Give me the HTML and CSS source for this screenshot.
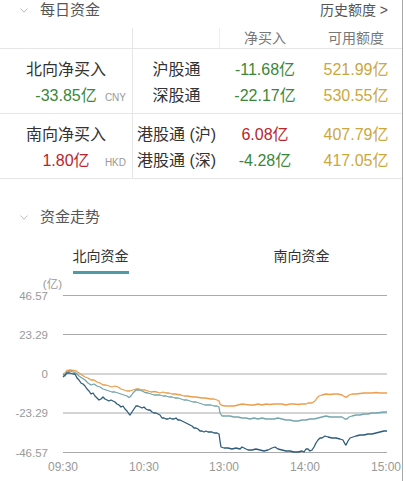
FILE: index.html
```html
<!DOCTYPE html>
<html lang="zh">
<head>
    <meta charset="UTF-8">
    <meta name="viewport" content="width=device-width, initial-scale=1.0">
    <title>资金流向</title>
    <link rel="stylesheet" href="styles.css">
</head>
<body>
    <div class="page">
        <div class="sec-head">
            <div class="sec-title">
                <svg class="chev" viewBox="0 0 8 5"><polyline points="0.5,0.5 4,4.2 7.5,0.5"/></svg>
                每日资金
            </div>
            <a class="more">历史额度 &gt;</a>
        </div>

        <div class="flow-table">
            <div class="flow-row flow-row--head">
                <div class="cell cell--left"></div>
                <div class="cell cell--mid"></div>
                <div class="cell">净买入</div>
                <div class="cell">可用额度</div>
            </div>
            <div class="flow-row">
                <div class="cell cell--left">
                    <div class="line">北向净买入</div>
                    <div class="line total"><span></span><span class="down">-33.85亿</span><span class="unit">CNY</span></div>
                </div>
                <div class="cell">
                    <div class="line">沪股通</div>
                    <div class="line">深股通</div>
                </div>
                <div class="cell">
                    <div class="line down">-11.68亿</div>
                    <div class="line down">-22.17亿</div>
                </div>
                <div class="cell">
                    <div class="line quota">521.99亿</div>
                    <div class="line quota">530.55亿</div>
                </div>
            </div>
            <div class="flow-row">
                <div class="cell cell--left">
                    <div class="line">南向净买入</div>
                    <div class="line total"><span></span><span class="up">1.80亿</span><span class="unit">HKD</span></div>
                </div>
                <div class="cell">
                    <div class="line">港股通 (沪)</div>
                    <div class="line">港股通 (深)</div>
                </div>
                <div class="cell">
                    <div class="line up">6.08亿</div>
                    <div class="line down">-4.28亿</div>
                </div>
                <div class="cell">
                    <div class="line quota">407.79亿</div>
                    <div class="line quota">417.05亿</div>
                </div>
            </div>
        </div>

        <div class="sec-head sec-head--trend">
            <div class="sec-title">
                <svg class="chev" viewBox="0 0 8 5"><polyline points="0.5,0.5 4,4.2 7.5,0.5"/></svg>
                资金走势
            </div>
        </div>

        <div class="tabs">
            <div class="tab tab--active"><span>北向资金</span></div>
            <div class="tab"><span>南向资金</span></div>
        </div>

        <svg class="chart" width="402" height="207" viewBox="0 274 402 207">
            <g class="grid">
                <line x1="63" y1="295.5" x2="387" y2="295.5"/>
                <line x1="63" y1="334.5" x2="387" y2="334.5"/>
                <line x1="63" y1="374" x2="387" y2="374"/>
                <line x1="63" y1="413" x2="387" y2="413"/>
                <line x1="63" y1="452.5" x2="387" y2="452.5"/>
            </g>
            <g class="axis">
                <text x="62" y="288" font-size="11">(亿)</text>
                <text x="48" y="300">46.57</text>
                <text x="48" y="339">23.29</text>
                <text x="48" y="378">0</text>
                <text x="48" y="417">-23.29</text>
                <text x="48" y="456.5">-46.57</text>
            </g>
            <g class="axis axis--x">
                <text x="63" y="471">09:30</text>
                <text x="144" y="471">10:30</text>
                <text x="224" y="471">13:00</text>
                <text x="305" y="471">14:00</text>
                <text x="386" y="471" text-anchor="end">15:00</text>
            </g>
            <!-- 沪股通 + 深股通 + 合计 -->
            <polyline class="series series--sh" points="63,374 65,373 67,370.5 70,370 73,370.5 76,371 79,373 82,375 85,377 88,378 91,380 94,380 97,382 100,383 103,385 106,385 109,386 112,387 115,386 118,387 121,389 124,390 127,391 130,391 133,390 136,389 139,389 142,390 145,390 148,391 151,392 154,391.5 157,392 160,393 163,392 166,393 169,393 172,394 175,394 178,394.5 181,395 184,396 187,396 190,396.5 193,397 196,397 199,397.5 202,398 205,398 208,398.5 211,399 214,399 217,400 219,401 220,404 222,405.5 226,406 230,406 234,406 238,405 242,404 246,404.5 250,405 254,405 258,404 262,405 266,404 270,404.5 274,404 278,404 282,404 286,405 290,404 294,404 298,404.5 302,404 306,404 308,403 312,403 315,401 317,398 319,396 322,395 326,394 330,394.5 334,394 338,394 342,395 345,397 347,397 349,395 352,394 356,394 360,393.5 364,393 368,393 372,393 376,392.5 380,393 384,393 387,393"/>
            <polyline class="series series--sz" points="63,374 65,376 67,372 70,371 73,372 76,373 79,376 82,378 85,380 88,383 91,385 94,384 97,386 100,387 103,389 106,390 109,391 112,392 115,392 118,393 121,394 124,395 127,396 129,397.5 131,396 133,393 136,390 139,390 142,391 145,392.5 148,393 151,394 154,395 157,395 160,395 163,396 166,396 169,397 172,397 175,398 178,398 181,399 184,400 187,400 190,401 193,402 196,402 199,403 202,404 205,405 208,405 211,405 214,406 217,406 219,407 220,413 222,416 226,416 230,416 234,417 238,417 242,418 246,418 250,419 254,418 258,419 262,418 266,419 270,419 274,419 278,418 282,419 286,420 290,420 294,421 298,421 302,420 306,420 310,419 314,419 318,418 322,417 326,416 330,417 334,417 338,417 342,417 345,419 347,419 349,417 352,416 356,415 360,415 364,414 368,414 372,413 376,413 380,412.5 384,412 387,412"/>
            <polyline class="series series--all" points="63,377 65,375 67,373 70,373 73,374 75,374 77,378 79,380 81,383 83,384 85,386 87,389 89,391 91,394 93,393 95,396 97,398 99,400 101,399 103,397 105,399 107,400 109,401 111,400 113,401 115,402 117,404 119,405 121,407 123,406 125,409 127,411 129,414 130,415 132,412 134,409 136,406 138,406 140,407 142,408 144,407 146,409 148,410 150,410 152,412 154,413 156,413 158,414 160,415 162,418 164,418 166,419 168,419 170,418 172,419 174,419 176,418 178,420 180,420 182,421 184,422 186,423 188,424 190,425 192,426 194,428 196,428 198,429 200,431 202,431 204,432 206,431 208,432 210,432 212,432 214,433 217,433 219,434 220,441 221,447 224,448 228,448 232,449 236,448 240,449 242,447 244,448 248,450 252,450 256,449 260,450 264,451 268,450 272,448 275,447 278,449 282,450 286,451 290,451 294,452 298,452 302,451 304,452 306,449 308,449 310,451 312,450 314,447 316,443 318,440 320,438 322,438 325,436 328,437 332,438 336,438 340,439 343,440 345,444 346,445 348,441 350,438 353,437 356,436 360,435 364,435 368,434 372,434 376,433 380,432 384,431 387,431"/>
        </svg>
    </div>
</body>
</html>
```

FILE: styles.css
```css
body {
    margin: 0;
    background-color: #fff;
    color: #333;
    font-family: "Liberation Sans", "Noto Sans CJK SC", sans-serif;
}
.page {
    width: 402px;
    min-height: 481px;
    border-right: 1px solid #a8a8a8;
}
.sec-head {
    display: flex;
    justify-content: space-between;
    height: 28px;
    line-height: 20px;
    padding: 0 14px 0 20px;
}
.sec-head--trend {
    height: 20px;
    margin-top: 28px;
}
.sec-title {
    display: flex;
    align-items: center;
    gap: 12px;
    height: 20px;
    font-size: 15px;
    color: #555;
}
.chev {
    width: 8px;
    height: 5px;
    fill: none;
    stroke: #bbb;
    stroke-width: 1;
}
.more {
    height: 20px;
    font-size: 14px;
    color: #555;
}
.flow-row {
    display: grid;
    grid-template-columns: 133px 87px 90px 92px;
    border-bottom: 1px solid #e6e6e6;
}
.cell {
    text-align: center;
    padding: 8px 0 4px;
    font-size: 16px;
    line-height: 26px;
}
.line {
    height: 26px;
}
.flow-row--head .cell {
    height: 20px;
    padding: 0;
    font-size: 14px;
    line-height: 20px;
    color: #777;
}
.cell--left {
    border-right: 1px solid #e6e6e6;
}
.flow-row--head .cell--mid {
    border-right: 1px solid #eee;
}
.total {
    display: grid;
    grid-template-columns: 1fr auto 1fr;
    align-items: baseline;
}
.unit {
    justify-self: end;
    padding-right: 6px;
    font-size: 10px;
    color: #999;
}
.down {
    color: #3a873a;
}
.up {
    color: #b8262c;
}
.quota {
    color: #cba73e;
}
.tabs {
    display: grid;
    grid-template-columns: 1fr 1fr;
    margin-top: 19px;
}
.tab {
    height: 28px;
    text-align: center;
    font-size: 14px;
    color: #333;
}
.tab span {
    display: inline-block;
    height: 20px;
    line-height: 20px;
    padding-bottom: 5px;
    border-bottom: 3px solid transparent;
}
.tab--active span {
    border-bottom-color: #4e9ba6;
}
.chart {
    display: block;
}
.grid line {
    stroke: #aaa;
    stroke-width: 1.2;
}
.axis text {
    fill: #999;
    font-size: 11.5px;
    text-anchor: end;
}
.axis--x text {
    font-size: 12px;
    text-anchor: middle;
}
.series {
    fill: none;
    stroke-width: 1.3;
    stroke-linejoin: round;
}
.series--sh {
    stroke: #ec9d4b;
}
.series--sz {
    stroke: #74a5ac;
}
.series--all {
    stroke: #2d5c7c;
}
```
